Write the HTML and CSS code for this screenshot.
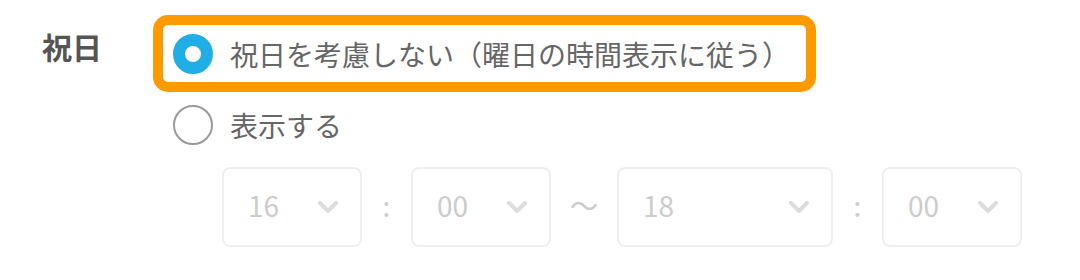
FILE: index.html
```html
<!DOCTYPE html>
<html lang="ja">
<head>
<meta charset="utf-8">
<link rel="stylesheet" href="styles.css">
</head>
<body>
<div class="field">
  <div class="field-label">祝日</div>
  <div class="field-body">
    <label class="option option-highlight">
      <span class="radio radio-checked"></span>
      <span class="option-text">祝日を考慮しない（曜日の時間表示に従う）</span>
    </label>
    <label class="option option-plain">
      <span class="radio"></span>
      <span class="option-text">表示する</span>
    </label>
    <div class="time-row">
      <div class="select select-short"><span class="select-value">16</span><svg class="chevron" viewBox="0 0 20 12"><polyline points="2,2 10,10 18,2"/></svg></div>
      <span class="sep sep-colon">:</span>
      <div class="select select-short"><span class="select-value">00</span><svg class="chevron" viewBox="0 0 20 12"><polyline points="2,2 10,10 18,2"/></svg></div>
      <span class="sep sep-tilde">〜</span>
      <div class="select select-wide"><span class="select-value">18</span><svg class="chevron" viewBox="0 0 20 12"><polyline points="2,2 10,10 18,2"/></svg></div>
      <span class="sep sep-colon">:</span>
      <div class="select select-short"><span class="select-value">00</span><svg class="chevron" viewBox="0 0 20 12"><polyline points="2,2 10,10 18,2"/></svg></div>
    </div>
  </div>
</div>
</body>
</html>
```

FILE: styles.css
```css
html, body {
  margin: 0;
  padding: 0;
  background: #ffffff;
}

body {
  font-family: "Noto Sans CJK JP", "Noto Sans", sans-serif;
  width: 1080px;
  height: 280px;
  overflow: hidden;
}

.field {
  display: flex;
  align-items: flex-start;
  padding-top: 15px;
  padding-left: 42px;
}

.field-label {
  width: 111px;
  margin-top: 11px;
  font-size: 30px;
  line-height: 40px;
  font-weight: 700;
  color: #555555;
}

.field-body {
  display: flex;
  flex-direction: column;
  align-items: flex-start;
}

.option {
  display: flex;
  align-items: center;
  gap: 17px;
  box-sizing: border-box;
}

.option-highlight {
  width: 663px;
  height: 77px;
  border: 10px solid #ff9900;
  border-radius: 15px;
  padding-left: 10px;
}

.option-plain {
  margin-top: 13px;
  padding-left: 20px;
  height: 40px;
}

.radio {
  width: 40px;
  height: 40px;
  border-radius: 50%;
  box-sizing: border-box;
  border: 2px solid #9a9a9a;
  flex: none;
}

.radio-checked {
  border: 12px solid #21aee6;
  background: #ffffff;
}

.option-text {
  font-size: 28px;
  line-height: 40px;
  color: #666666;
  white-space: nowrap;
}

.time-row {
  display: flex;
  align-items: center;
  margin-top: 22px;
  margin-left: 69px;
}

.select {
  height: 80px;
  box-sizing: border-box;
  border: 2px solid #efefef;
  border-radius: 8px;
  display: flex;
  align-items: center;
  justify-content: space-between;
  padding-left: 24px;
  padding-right: 22px;
}

.select-short {
  width: 140px;
}

.select-wide {
  width: 216px;
}

.select-value {
  font-size: 28px;
  line-height: 40px;
  padding-bottom: 5px;
  color: #cccccc;
}

.chevron {
  width: 20px;
  height: 12px;
  fill: none;
  stroke: #dddddd;
  stroke-width: 4;
  stroke-linecap: round;
  stroke-linejoin: round;
}

.sep {
  display: flex;
  justify-content: center;
  font-size: 28px;
  line-height: 40px;
  padding-bottom: 4px;
  color: #cccccc;
}

.sep-colon {
  width: 49px;
}

.sep-tilde {
  width: 66px;
}
```
